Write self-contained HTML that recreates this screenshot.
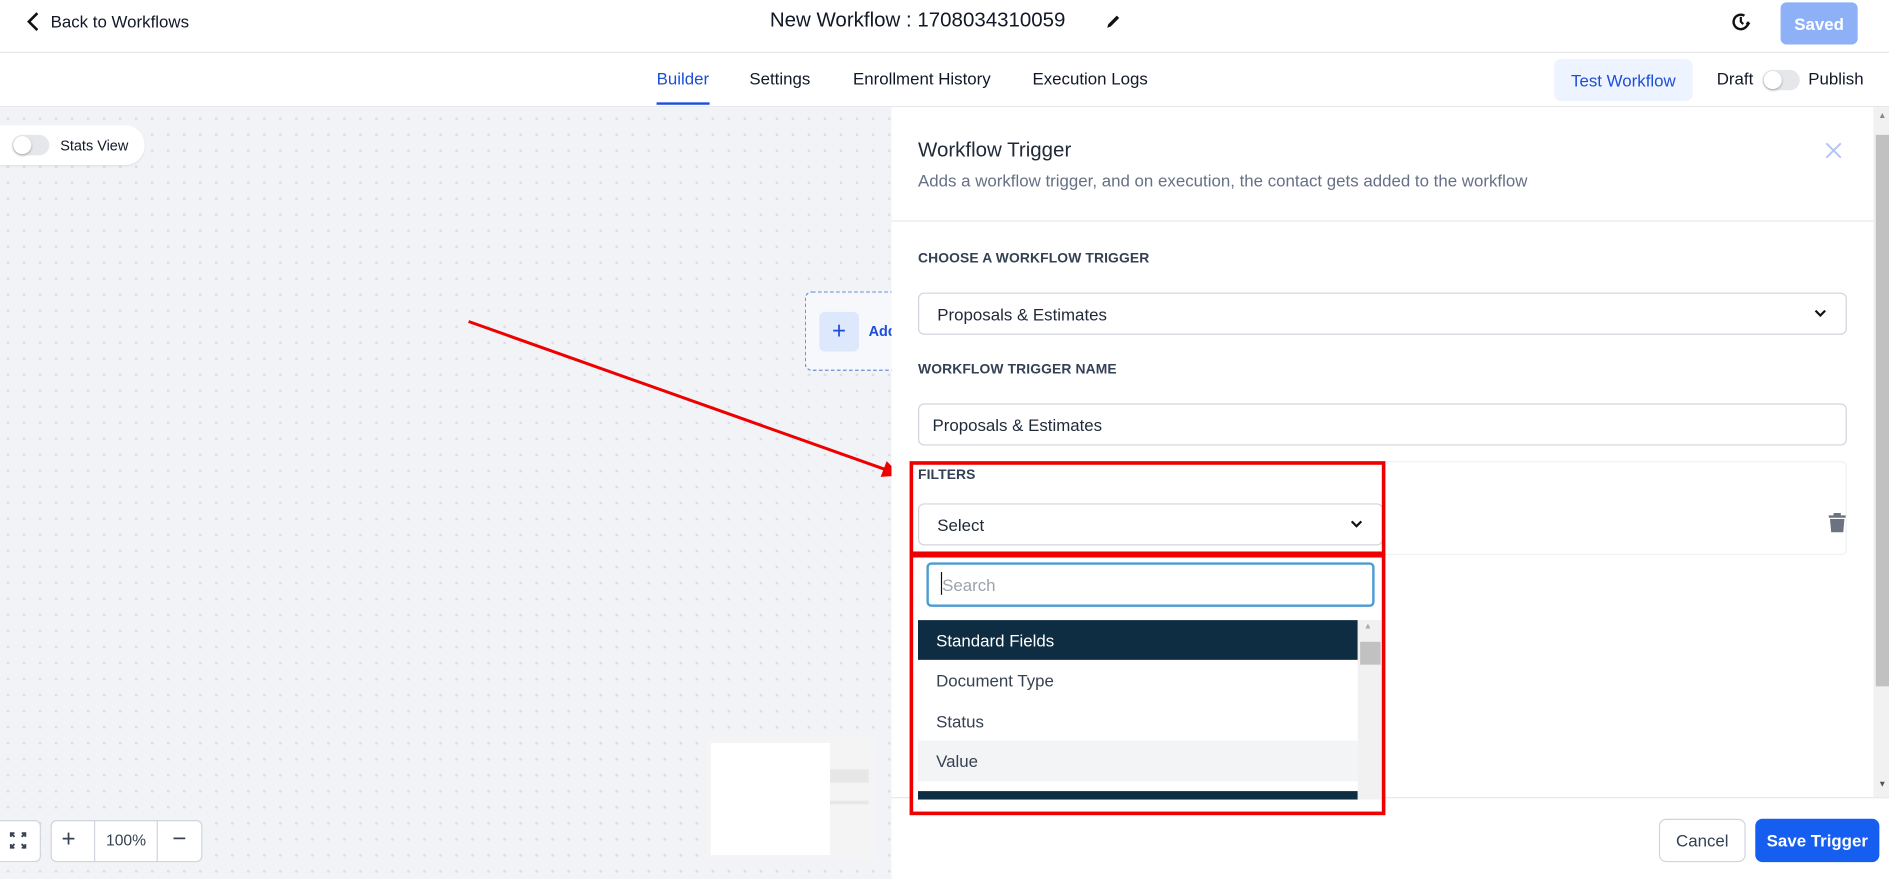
<!DOCTYPE html>
<html><head><meta charset="utf-8"><style>
*{box-sizing:border-box;margin:0;padding:0}
body{width:1889px;height:879px;overflow:hidden;background:#fff;font-family:"Liberation Sans",Arial,sans-serif;color:#111827}
#w{position:absolute;left:0;top:0;width:1568px;height:730px;transform:scale(1.20472,1.20411);transform-origin:0 0;overflow:hidden}
.a{position:absolute}
.t{position:absolute;white-space:nowrap}
.lbl{position:absolute;font-size:11.5px;font-weight:bold;color:#344054;letter-spacing:.1px}
.inp{position:absolute;border:1px solid #d0d5dd;border-radius:5px;background:#fff;font-size:14px;color:#1f2937;padding-left:15px;display:flex;align-items:center}
.row{position:absolute;left:762px;width:365px;height:34px;font-size:14px;padding-left:15px;display:flex;align-items:center;color:#374151}
</style></head><body><div id="w">
<!-- header -->
<div class="a" style="left:0;top:43px;width:1568px;height:1px;background:#e5e7eb"></div>
<svg class="a" style="left:20px;top:9px" width="14" height="18" viewBox="0 0 14 18"><path d="M11 2 L4 9 L11 16" fill="none" stroke="#111" stroke-width="2.2"/></svg>
<div class="t" style="left:42px;top:10px;font-size:14px">Back to Workflows</div>
<div class="t" style="left:639px;top:7px;font-size:17px">New Workflow : 1708034310059</div>
<svg class="a" style="left:917px;top:11px" width="14" height="14" viewBox="0 0 14 14"><path d="M2 12 L3 9 L10 2 L12 4 L5 11 Z" fill="#111"/></svg>
<svg class="a" style="left:1436px;top:9px" width="18" height="18" viewBox="0 0 18 18"><path d="M15 9 A6 6 0 1 1 12 4" fill="none" stroke="#111" stroke-width="2"/><path d="M9 5 V9 L11 11" fill="none" stroke="#111" stroke-width="1.8"/><path d="M13 10 L15 13 L17 10" fill="#111"/></svg>
<div class="a" style="left:1478px;top:2px;width:64px;height:35px;background:#8db0f6;border-radius:5px;color:#fff;font-size:14px;font-weight:bold;display:flex;align-items:center;justify-content:center">Saved</div>
<!-- nav -->
<div class="a" style="left:0;top:88px;width:1568px;height:1px;background:#e5e7eb"></div>
<div class="t" style="left:545px;top:57px;font-size:14px;color:#1d4ed8">Builder</div>
<div class="a" style="left:545px;top:85px;width:44px;height:2px;background:#1d4ed8"></div>
<div class="t" style="left:622px;top:57px;font-size:14px">Settings</div>
<div class="t" style="left:708px;top:57px;font-size:14px">Enrollment History</div>
<div class="t" style="left:857px;top:57px;font-size:14px">Execution Logs</div>
<div class="a" style="left:1290px;top:49px;width:115px;height:35px;background:#eef4ff;border-radius:6px;color:#1d4ed8;font-size:14px;display:flex;align-items:center;justify-content:center">Test Workflow</div>
<div class="t" style="left:1425px;top:57px;font-size:14px">Draft</div>
<div class="a" style="left:1463px;top:58px;width:31px;height:17px;background:#e5e7eb;border-radius:9px"><div class="a" style="left:1px;top:1px;width:15px;height:15px;border-radius:50%;background:#fff;box-shadow:0 1px 2px rgba(0,0,0,.3)"></div></div>
<div class="t" style="left:1501px;top:57px;font-size:14px">Publish</div>
<!-- canvas -->
<div class="a" style="left:0;top:89px;width:740px;height:641px;background-color:#f2f3f7;background-image:radial-gradient(circle,#dcdde3 1px,transparent 1.3px);background-size:13.3px 13.3px;background-position:0 3px"></div>
<div class="a" style="left:0;top:104px;width:120px;height:33px;background:#fff;border-radius:0 16px 16px 0;box-shadow:0 1px 2px rgba(0,0,0,.08)"></div>
<div class="a" style="left:10px;top:112px;width:31px;height:17px;background:#e5e7eb;border-radius:9px"><div class="a" style="left:1px;top:1px;width:15px;height:15px;border-radius:50%;background:#fff;box-shadow:0 1px 2px rgba(0,0,0,.3)"></div></div>
<div class="t" style="left:50px;top:114px;font-size:12px">Stats View</div>
<div class="a" style="left:668px;top:242px;width:80px;height:66px;border:1px dashed #6b8fd6;border-radius:6px;background:#f7f8fb"></div>
<div class="a" style="left:680px;top:259px;width:33px;height:33px;background:#dde8fd;border-radius:5px;color:#1d4ed8;font-size:20px;display:flex;align-items:center;justify-content:center">+</div>
<div class="t" style="left:721px;top:268px;font-size:12px;font-weight:bold;color:#1d4ed8">Add</div>
<svg class="a" style="left:0;top:0" width="760" height="420"><line x1="389" y1="267" x2="738" y2="391" stroke="#e00" stroke-width="2.5"/><path d="M748 395 L731 396 L736 383 Z" fill="#e00"/></svg>
<div class="a" style="left:0;top:681px;width:34px;height:35px;background:#fff;border:1px solid #d0d5dd;border-left:none;border-radius:0 5px 5px 0"></div>
<svg class="a" style="left:7px;top:690px" width="16" height="16" viewBox="0 0 16 16" fill="none" stroke="#374151" stroke-width="1.6"><path d="M2 5V2H5M2 2L5 5M14 5V2H11M14 2L11 5M2 11V14H5M2 14L5 11M14 11V14H11M14 14L11 11"/></svg>
<div class="a" style="left:42px;top:681px;width:126px;height:35px;background:#fff;border:1px solid #d0d5dd;border-radius:5px"></div>
<div class="a" style="left:78px;top:681px;width:1px;height:35px;background:#d0d5dd"></div>
<div class="a" style="left:130px;top:681px;width:1px;height:35px;background:#d0d5dd"></div>
<div class="t" style="left:51px;top:686px;font-size:20px;color:#374151">+</div>
<div class="t" style="left:88px;top:690px;font-size:13px;color:#374151">100%</div>
<div class="t" style="left:143px;top:686px;font-size:20px;color:#374151">−</div>
<div class="a" style="left:586px;top:612px;width:140px;height:102px;background:#f4f4f5"></div>
<div class="a" style="left:590px;top:617px;width:99px;height:93px;background:#fff"></div>
<div class="a" style="left:689px;top:639px;width:32px;height:11px;background:#e7e7e8"></div>
<div class="a" style="left:689px;top:665px;width:32px;height:3px;background:#e7e7e8"></div>
<!-- panel -->
<div class="a" style="left:740px;top:89px;width:815px;height:641px;background:#fff"></div>
<div class="a" style="left:1555px;top:89px;width:13px;height:573px;background:#f1f1f1"></div>
<div class="a" style="left:1557px;top:112px;width:11px;height:458px;background:#c1c1c1"></div>
<div class="t" style="left:1559px;top:93px;font-size:7px;color:#888">▲</div>
<div class="t" style="left:1559px;top:648px;font-size:7px;color:#555">▼</div>
<div class="t" style="left:762px;top:115px;font-size:17px;color:#1f2937">Workflow Trigger</div>
<div class="t" style="left:762px;top:142px;font-size:14px;color:#667085">Adds a workflow trigger, and on execution, the contact gets added to the workflow</div>
<svg class="a" style="left:1514px;top:117px" width="16" height="16"><path d="M2 2L14 14M14 2L2 14" stroke="#b4c3f0" stroke-width="1.6"/></svg>
<div class="a" style="left:740px;top:183px;width:815px;height:1px;background:#e5e7eb"></div>
<div class="lbl" style="left:762px;top:209px">CHOOSE A WORKFLOW TRIGGER</div>
<div class="inp" style="left:762px;top:243px;width:771px;height:35px">Proposals &amp; Estimates</div>
<svg class="a" style="left:1505px;top:255px" width="12" height="10"><path d="M2 3L6 7L10 3" fill="none" stroke="#111" stroke-width="1.8"/></svg>
<div class="lbl" style="left:762px;top:301px">WORKFLOW TRIGGER NAME</div>
<div class="inp" style="left:762px;top:335px;width:771px;height:35px;padding-left:11px">Proposals &amp; Estimates</div>
<div class="a" style="left:755px;top:383px;width:778px;height:78px;border:1px solid #f0f1f3;border-radius:4px"></div>
<div class="lbl" style="left:762px;top:389px">FILTERS</div>
<div class="inp" style="left:762px;top:418px;width:386px;height:35px">Select</div>
<svg class="a" style="left:1120px;top:430px" width="12" height="10"><path d="M2 3L6 7L10 3" fill="none" stroke="#111" stroke-width="1.8"/></svg>
<svg class="a" style="left:1517px;top:425px" width="16" height="18" viewBox="0 0 16 18"><path d="M5 1H11V3H15V5H1V3H5Z M2 6H14L13 17H3Z" fill="#6b7280"/></svg>
<div class="a" style="left:740px;top:662px;width:828px;height:1px;background:#e5e7eb"></div>
<div class="a" style="left:755px;top:461px;width:395px;height:215px;background:#fff"></div>
<div class="a" style="left:769px;top:467px;width:372px;height:37px;border:2px solid #4b9bd4;border-radius:4px;font-size:14px;color:#9ca3af;padding-left:11px;display:flex;align-items:center">Search</div>
<div class="a" style="left:781px;top:475px;width:1px;height:19px;background:#111"></div>
<div class="row" style="top:515px;height:33px;background:#0f2d42;color:#fff">Standard Fields</div>
<div class="row" style="top:548px">Document Type</div>
<div class="row" style="top:582px">Status</div>
<div class="row" style="top:615px;background:#f3f4f6">Value</div>
<div class="a" style="left:762px;top:657px;width:365px;height:7px;background:#0f2d42"></div>
<div class="a" style="left:1127px;top:515px;width:20px;height:149px;background:#f1f1f1"></div>
<div class="a" style="left:1129px;top:533px;width:17px;height:19px;background:#c1c1c1"></div>
<div class="t" style="left:1132px;top:517px;font-size:7px;color:#aaa">▲</div>
<div class="a" style="left:755px;top:383px;width:395px;height:78px;border:3px solid #e00"></div>
<div class="a" style="left:755px;top:460px;width:395px;height:217px;border:3px solid #e00"></div>
<div class="a" style="left:1377px;top:680px;width:72px;height:36px;border:1px solid #d0d5dd;border-radius:6px;font-size:14px;display:flex;align-items:center;justify-content:center;background:#fff;color:#344054">Cancel</div>
<div class="a" style="left:1457px;top:680px;width:103px;height:36px;background:#155eef;border-radius:6px;color:#fff;font-size:14px;font-weight:bold;display:flex;align-items:center;justify-content:center">Save Trigger</div>
</div></body></html>
